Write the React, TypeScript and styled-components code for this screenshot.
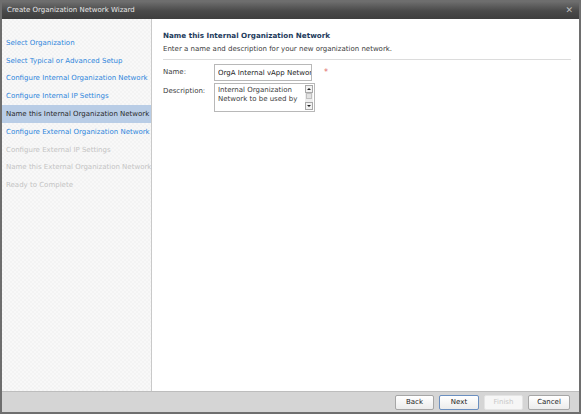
import * as React from "react"
import styled, { createGlobalStyle } from "styled-components"

const GlobalStyle = createGlobalStyle`
    html, body {
        margin: 0;
        padding: 0;
        background: #ffffff;
    }
    body {
        font-family: "DejaVu Sans", Verdana, sans-serif;
    }
`

const WindowFrame = styled.div`
    box-sizing: border-box;
    width: 581px;
    height: 414px;
    display: flex;
    flex-direction: column;
    border: 1px solid #6e6e6e;
    border-left-width: 2px;
    border-right-width: 2px;
    border-bottom-width: 2px;
    background: #ffffff;
    overflow: hidden;
`

const TitleBar = styled.div`
    height: 18px;
    flex: 0 0 18px;
    display: flex;
    align-items: center;
    justify-content: space-between;
    padding: 0 5px 0 5px;
    background: linear-gradient(#707070, #4a4a4a 55%, #3e3e3e);
    color: #e8e8e8;
    font-size: 7px;
`

const CloseGlyph = styled.span`
    color: #bdbdbd;
    font-size: 9px;
    font-weight: bold;
    margin-right: 1px;
`

const Body = styled.div`
    flex: 1;
    display: flex;
    min-height: 0;
`

const Sidebar = styled.div`
    width: 149px;
    flex: 0 0 149px;
    border-right: 1px solid #c9c9c9;
    background-color: #f8f8f8;
    background-image: linear-gradient(45deg, #f3f3f3 25%, transparent 25%, transparent 75%, #f3f3f3 75%),
        linear-gradient(45deg, #f3f3f3 25%, transparent 25%, transparent 75%, #f3f3f3 75%);
    background-size: 4px 4px;
    background-position: 0 0, 2px 2px;
    padding-top: 15px;
`

type StepState = "done" | "active" | "pending"

const StepRow = styled.div<{ $state: StepState }>`
    height: 17.8px;
    display: flex;
    align-items: center;
    padding-left: 4px;
    font-size: 7px;
    white-space: nowrap;
    color: ${p => (p.$state === "done" ? "#2f86dc" : p.$state === "active" ? "#2a2a2a" : "#c4c4c4")};
    background: ${p => (p.$state === "active" ? "#b9cde6" : "transparent")};
`

const Main = styled.div`
    flex: 1;
    padding: 10px 8px 0 11px;
    display: flex;
    flex-direction: column;
`

const Heading = styled.div`
    font-size: 7.2px;
    font-weight: bold;
    color: #1d3b5c;
    height: 12px;
    display: flex;
    align-items: center;
`

const Subtitle = styled.div`
    font-size: 7px;
    color: #3c3c3c;
    margin-top: 3px;
    height: 10px;
    display: flex;
    align-items: center;
`

const Divider = styled.div`
    height: 1px;
    background: #dcdcdc;
    margin-top: 5px;
    margin-bottom: 4px;
`

const FormGrid = styled.div`
    display: grid;
    grid-template-columns: 51px auto 1fr;
    row-gap: 2px;
    align-items: start;
`

const Label = styled.div`
    font-size: 7px;
    color: #3c3c3c;
    padding-top: 4px;
`

const TextBox = styled.input`
    box-sizing: border-box;
    width: 98px;
    height: 17px;
    margin: 0;
    border: 1px solid #b8b8b8;
    border-radius: 0;
    outline: none;
    padding: 0 0 0 3px;
    font-family: "DejaVu Sans", Verdana, sans-serif;
    font-size: 7px;
    color: #222;
    background: #ffffff;
`

const Required = styled.span`
    color: #e06a6a;
    font-size: 8px;
    padding-left: 9px;
    padding-top: 4px;
`

const TextArea = styled.div`
    box-sizing: border-box;
    width: 101px;
    height: 29px;
    border: 1px solid #b8b8b8;
    display: flex;
`

const AreaText = styled.div`
    flex: 1;
    font-size: 7px;
    line-height: 9px;
    color: #3c3c3c;
    padding: 2px 0 0 3px;
    overflow: hidden;
`

const ScrollBar = styled.div`
    width: 8px;
    margin: 1px 1px 1px 0;
    display: flex;
    flex-direction: column;
    background: #eeeeee;
`

const ScrollArrow = styled.div<{ $down?: boolean }>`
    height: 8px;
    box-sizing: border-box;
    border: 1px solid #a8a8a8;
    background: #f2f2f2;
    display: flex;
    align-items: center;
    justify-content: center;
    &::after {
        content: "";
        border-left: 2px solid transparent;
        border-right: 2px solid transparent;
        ${p => (p.$down ? "border-top: 2px solid #222;" : "border-bottom: 2px solid #222;")}
    }
`

const ScrollTrack = styled.div`
    flex: 1;
    display: flex;
    justify-content: center;
    align-items: flex-start;
`

const ScrollThumb = styled.div`
    width: 6px;
    height: 6px;
    box-sizing: border-box;
    border: 1px solid #c0c0c0;
    background: #e2e2e2;
`

const Footer = styled.div`
    height: 20px;
    flex: 0 0 20px;
    border-top: 1px solid #bdbdbd;
    background: #d5d5d5;
    display: flex;
    align-items: center;
    justify-content: flex-end;
    gap: 5px;
    padding-right: 9px;
`

const Button = styled.div<{ $focused?: boolean; $disabled?: boolean; $w: number }>`
    box-sizing: border-box;
    width: ${p => p.$w}px;
    height: 15px;
    display: flex;
    align-items: center;
    justify-content: center;
    font-size: 7px;
    border-radius: 2px;
    border: 1px solid ${p => (p.$focused ? "#6b8fc0" : p.$disabled ? "#e4e4e4" : "#a6a6a6")};
    background: ${p => (p.$disabled ? "#f6f6f6" : "linear-gradient(#ffffff, #ececec)")};
    color: ${p => (p.$disabled ? "#c8c8c8" : "#222")};
`

const steps: { label: string; state: StepState }[] = [
    { label: "Select Organization", state: "done" },
    { label: "Select Typical or Advanced Setup", state: "done" },
    { label: "Configure Internal Organization Network", state: "done" },
    { label: "Configure Internal IP Settings", state: "done" },
    { label: "Name this Internal Organization Network", state: "active" },
    { label: "Configure External Organization Network", state: "done" },
    { label: "Configure External IP Settings", state: "pending" },
    { label: "Name this External Organization Network", state: "pending" },
    { label: "Ready to Complete", state: "pending" },
]

export default function App() {
    return (
        <>
            <GlobalStyle />
            <WindowFrame>
                <TitleBar>
                    <span>Create Organization Network Wizard</span>
                    <CloseGlyph>✕</CloseGlyph>
                </TitleBar>
                <Body>
                    <Sidebar>
                        {steps.map(s => (
                            <StepRow key={s.label} $state={s.state}>
                                {s.label}
                            </StepRow>
                        ))}
                    </Sidebar>
                    <Main>
                        <Heading>Name this Internal Organization Network</Heading>
                        <Subtitle>Enter a name and description for your new organization network.</Subtitle>
                        <Divider />
                        <FormGrid>
                            <Label>Name:</Label>
                            <TextBox readOnly value="OrgA Internal vApp Network" />
                            <Required>*</Required>
                            <Label>Description:</Label>
                            <TextArea>
                                <AreaText>
                                    Internal Organization Network to be used by
                                </AreaText>
                                <ScrollBar>
                                    <ScrollArrow />
                                    <ScrollTrack>
                                        <ScrollThumb />
                                    </ScrollTrack>
                                    <ScrollArrow $down />
                                </ScrollBar>
                            </TextArea>
                            <span />
                        </FormGrid>
                    </Main>
                </Body>
                <Footer>
                    <Button $w={39}>Back</Button>
                    <Button $w={40} $focused>Next</Button>
                    <Button $w={39} $disabled>Finish</Button>
                    <Button $w={42}>Cancel</Button>
                </Footer>
            </WindowFrame>
        </>
    )
}
